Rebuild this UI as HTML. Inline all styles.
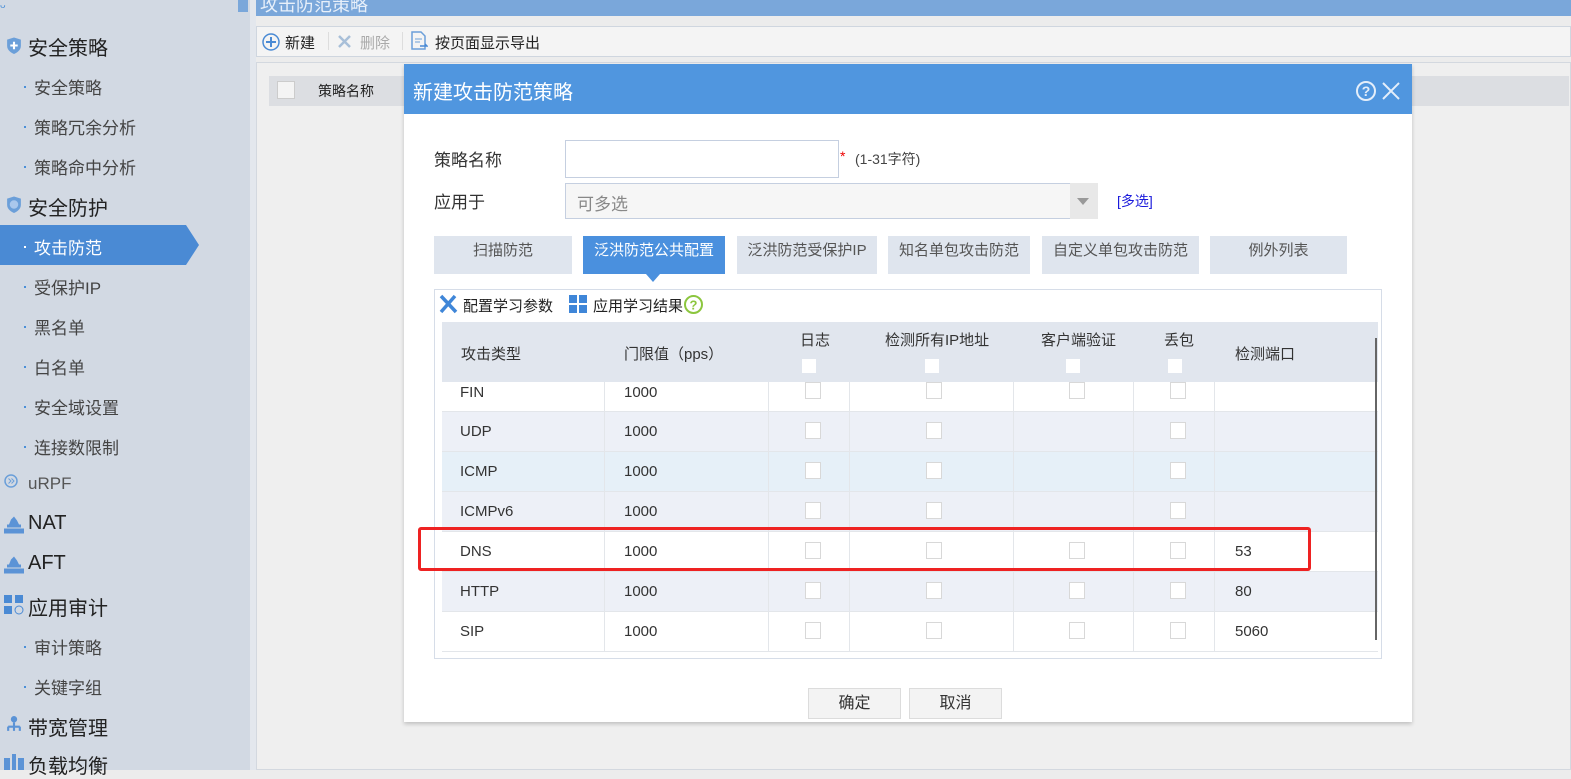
<!DOCTYPE html>
<html><head><meta charset="utf-8"><style>
*{margin:0;padding:0;box-sizing:border-box}
body{width:1571px;height:770px;overflow:hidden;position:relative;background:#ececec;font-family:"Liberation Sans","Noto Sans CJK SC",sans-serif;color:#333}
.a{position:absolute}
.side{left:0;top:0;width:250px;height:770px;background:#d2d9e3}
.strip{left:250px;top:0;width:6px;height:770px;background:#e3e7ed}
.h{font-size:20px;color:#222;left:28px}
.s{font-size:17px;color:#444;left:34px}
.dot{left:24px;width:2px;height:2px;background:#4a8fd8}
.ic{left:5px;width:17px;height:17px}
.row{left:442px;width:936px;height:40px;border-bottom:1px solid #e3e6ea}
.cell{position:absolute;top:0;height:100%;font-size:15px;line-height:40px;color:#333}
.cb{position:absolute;width:16px;height:17px;border:1px solid #d8d8d8;background:#fff}
.vl{position:absolute;top:0;width:1px;height:100%;background:#e3e6ea}
.tab{top:236px;height:38px;background:#dfe5ee;font-size:15px;color:#555;text-align:center;line-height:30px}
</style></head><body>
<div class="a side"></div><div class="a strip"></div>
<div class="a" style="left:0;top:0;font-size:10px;color:#4a8fd8">ᴗ</div>
<div class="a" style="left:238px;top:0;width:10px;height:12px;background:#7aa7da"></div>
<!-- sidebar -->
<svg class="a ic" style="top:36px;width:18px;height:19px" viewBox="0 0 17 17"><path d="M8.5 1 L15 3 V9 C15 13 11 15.5 8.5 16.5 C6 15.5 2 13 2 9 V3Z" fill="#6b9fd9"/><path d="M8.5 5v7M5 8.5h7" stroke="#fff" stroke-width="2"/></svg>
<div class="a h" style="top:32px">安全策略</div>
<div class="a dot" style="top:86px"></div><div class="a s" style="top:74px">安全策略</div>
<div class="a dot" style="top:126px"></div><div class="a s" style="top:114px">策略冗余分析</div>
<div class="a dot" style="top:166px"></div><div class="a s" style="top:154px">策略命中分析</div>
<svg class="a ic" style="top:195px;width:18px;height:19px" viewBox="0 0 17 17"><path d="M8.5 1 L15 3 V9 C15 13 11 15.5 8.5 16.5 C6 15.5 2 13 2 9 V3Z" fill="#6b9fd9"/><circle cx="8.5" cy="8.5" r="4" fill="#a9c7ec"/></svg>
<div class="a h" style="top:192px">安全防护</div>
<svg class="a" style="left:0;top:225px" width="200" height="40"><path d="M0 0H186L199 20L186 40H0Z" fill="#4a8ad4"/></svg>
<div class="a dot" style="top:246px;background:#fff"></div><div class="a s" style="top:234px;color:#fff">攻击防范</div>
<div class="a dot" style="top:286px"></div><div class="a s" style="top:274px">受保护IP</div>
<div class="a dot" style="top:326px"></div><div class="a s" style="top:314px">黑名单</div>
<div class="a dot" style="top:366px"></div><div class="a s" style="top:354px">白名单</div>
<div class="a dot" style="top:406px"></div><div class="a s" style="top:394px">安全域设置</div>
<div class="a dot" style="top:446px"></div><div class="a s" style="top:434px">连接数限制</div>
<svg class="a" style="left:4px;top:474px" width="14" height="14"><circle cx="7" cy="7" r="6" fill="none" stroke="#6b9fd9" stroke-width="1.5"/><path d="M4.5 4.5l2.5 2.5-2.5 2.5M7.5 4.5l2.5 2.5-2.5 2.5" fill="none" stroke="#6b9fd9"/></svg>
<div class="a" style="left:28px;top:474px;font-size:17px;color:#555">uRPF</div>
<svg class="a" style="left:4px;top:515px" width="20" height="20" viewBox="0 0 20 17"><path d="M0 12h20v5H0zM3 8h14v3H3zM7 3l3-3 3 4 2 4H5z" fill="#5b93d6"/></svg>
<div class="a h" style="top:512px">NAT</div>
<svg class="a" style="left:4px;top:555px" width="20" height="20" viewBox="0 0 20 17"><path d="M0 12h20v5H0zM3 8h14v3H3zM7 3l3-3 3 4 2 4H5z" fill="#5b93d6"/></svg>
<div class="a h" style="top:552px">AFT</div>
<svg class="a" style="left:4px;top:595px" width="20" height="20" viewBox="0 0 20 20"><rect x="0" y="0" width="8" height="8" fill="#4a8ad4"/><rect x="11" y="0" width="8" height="8" fill="#4a8ad4"/><rect x="0" y="11" width="8" height="8" fill="#4a8ad4"/><circle cx="15" cy="15" r="4" fill="none" stroke="#4a8ad4"/></svg>
<div class="a h" style="top:592px">应用审计</div>
<div class="a dot" style="top:646px"></div><div class="a s" style="top:634px">审计策略</div>
<div class="a dot" style="top:686px"></div><div class="a s" style="top:674px">关键字组</div>
<svg class="a" style="left:5px;top:714px" width="18" height="20" viewBox="0 0 17 17"><circle cx="8.5" cy="4" r="3" fill="#5b93d6"/><path d="M8.5 7v4M3 11h11M3 11v4M8.5 11v4M14 11v4" stroke="#5b93d6" stroke-width="2"/></svg>
<div class="a h" style="top:712px">带宽管理</div>
<svg class="a" style="left:4px;top:754px" width="20" height="17" viewBox="0 0 20 17"><rect x="0" y="4" width="6" height="12" fill="#5b93d6"/><rect x="14" y="4" width="6" height="12" fill="#5b93d6"/><rect x="8" y="0" width="4" height="16" fill="#5b93d6"/></svg>
<div class="a h" style="top:750px">负载均衡</div>
<!-- main -->
<div class="a" style="left:256px;top:0;width:1315px;height:16px;background:#7aa7da;overflow:hidden"><span style="position:absolute;left:4px;top:-9px;font-size:18px;color:#e8f0fa">攻击防范策略</span></div>
<div class="a" style="left:256px;top:26px;width:1315px;height:31px;background:#f4f4f4;border:1px solid #cfd6df"></div>
<svg class="a" style="left:262px;top:33px" width="18" height="18"><circle cx="9" cy="9" r="8" fill="none" stroke="#4a8ad4" stroke-width="1.5"/><path d="M9 4v10M4 9h10" stroke="#4a8ad4" stroke-width="2"/></svg>
<div class="a" style="left:285px;top:32px;font-size:15px;color:#222">新建</div>
<div class="a" style="left:328px;top:32px;width:1px;height:18px;background:#ddd"></div>
<svg class="a" style="left:337px;top:34px" width="15" height="15"><path d="M2 2l11 11M13 2L2 13" stroke="#a8bfd8" stroke-width="2.5"/></svg>
<div class="a" style="left:360px;top:32px;font-size:15px;color:#aaa">删除</div>
<div class="a" style="left:402px;top:32px;width:1px;height:18px;background:#ddd"></div>
<svg class="a" style="left:410px;top:31px" width="18" height="20"><path d="M2 1h9l4 4v13H2z" fill="none" stroke="#6b9fd9" stroke-width="1.5"/><path d="M5 8h7M5 11h5" stroke="#6b9fd9"/><path d="M10 15h7l-2-2" stroke="#4a8ad4" fill="none" stroke-width="1.5"/></svg>
<div class="a" style="left:435px;top:32px;font-size:15px;color:#222">按页面显示导出</div>
<div class="a" style="left:256px;top:62px;width:1315px;height:708px;background:#efefef;border:1px solid #d3d8df"></div>
<div class="a" style="left:269px;top:76px;width:1300px;height:30px;background:#dcdee2"></div>
<div class="a" style="left:277px;top:81px;width:18px;height:18px;border:1px solid #ccc;background:#f4f4f4"></div>
<div class="a" style="left:318px;top:81px;font-size:14px;color:#222">策略名称</div>
<!-- modal -->
<div class="a" style="left:404px;top:64px;width:1008px;height:658px;background:#fff;box-shadow:0 2px 4px rgba(0,0,0,.2)"></div>
<div class="a" style="left:404px;top:64px;width:1008px;height:50px;background:#5096df"></div>
<div class="a" style="left:413px;top:76px;font-size:20px;color:#fff">新建攻击防范策略</div>
<svg class="a" style="left:1356px;top:80px" width="46" height="24"><circle cx="10" cy="11" r="9" fill="none" stroke="#e4eefa" stroke-width="2"/><text x="10" y="16" font-size="14" font-family="Liberation Sans" fill="#e4eefa" text-anchor="middle" font-weight="bold">?</text><path d="M27 3l16 16M43 3L27 19" stroke="#e4eefa" stroke-width="2"/></svg>
<div class="a" style="left:434px;top:146px;font-size:17px;color:#333">策略名称</div>
<div class="a" style="left:565px;top:140px;width:274px;height:38px;border:1px solid #c5cfe0"></div>
<div class="a" style="left:840px;top:148px;font-size:14px;color:#e00">*</div>
<div class="a" style="left:855px;top:149px;font-size:14px;color:#444">(1-31字符)</div>
<div class="a" style="left:434px;top:188px;font-size:17px;color:#333">应用于</div>
<div class="a" style="left:565px;top:183px;width:527px;height:36px;border:1px solid #c5cfe0;background:#f6f6f6"></div>
<div class="a" style="left:1070px;top:183px;width:28px;height:36px;background:#e8e8e8"></div>
<div class="a" style="left:1077px;top:198px;width:0;height:0;border-left:6px solid transparent;border-right:6px solid transparent;border-top:7px solid #999"></div>
<div class="a" style="left:577px;top:190px;font-size:17px;color:#888">可多选</div>
<div class="a" style="left:1117px;top:191px;font-size:14px;color:#1a1adc">[多选]</div>
<div class="a tab" style="left:434px;width:138px">扫描防范</div>
<div class="a tab" style="left:583px;width:142px;background:#4a90de;color:#fff">泛洪防范公共配置</div>
<div class="a" style="left:646px;top:274px;border-left:7px solid transparent;border-right:7px solid transparent;border-top:8px solid #4a90de;width:0;height:0"></div>
<div class="a tab" style="left:737px;width:140px">泛洪防范受保护IP</div>
<div class="a tab" style="left:888px;width:142px">知名单包攻击防范</div>
<div class="a tab" style="left:1042px;width:157px">自定义单包攻击防范</div>
<div class="a tab" style="left:1210px;width:137px">例外列表</div>
<div class="a" style="left:434px;top:289px;width:948px;height:370px;border:1px solid #d6dde8"></div>
<svg class="a" style="left:438px;top:294px" width="20" height="20"><path d="M3 2l15 16M17 2L3 18" stroke="#3f86d8" stroke-width="3.5"/></svg>
<div class="a" style="left:463px;top:295px;font-size:15px;color:#222">配置学习参数</div>
<svg class="a" style="left:569px;top:295px" width="18" height="18"><rect x="0" y="0" width="8" height="8" fill="#3f86d8"/><rect x="10" y="0" width="8" height="8" fill="#3f86d8"/><rect x="0" y="10" width="8" height="8" fill="#3f86d8"/><rect x="10" y="10" width="8" height="8" fill="#3f86d8"/></svg>
<div class="a" style="left:593px;top:295px;font-size:15px;color:#222">应用学习结果</div>
<svg class="a" style="left:684px;top:295px" width="19" height="19"><circle cx="9.5" cy="9.5" r="8.5" fill="#fff" stroke="#8cc63e" stroke-width="2"/><text x="9.5" y="14.5" font-size="13" font-family="Liberation Sans" fill="#8cc63e" text-anchor="middle" font-weight="bold">?</text></svg>
<!-- table header -->
<div class="a" style="left:442px;top:322px;width:936px;height:60px;background:#e1e6ee"></div>
<div class="a" style="left:461px;top:343px;font-size:15px">攻击类型</div>
<div class="a" style="left:624px;top:343px;font-size:15px">门限值（pps）</div>
<div class="a" style="left:800px;top:329px;font-size:15px">日志</div>
<div class="a" style="left:885px;top:329px;font-size:15px">检测所有IP地址</div>
<div class="a" style="left:1041px;top:329px;font-size:15px">客户端验证</div>
<div class="a" style="left:1164px;top:329px;font-size:15px">丢包</div>
<div class="a" style="left:1235px;top:343px;font-size:15px">检测端口</div>
<div class="cb" style="left:802px;top:359px;border:none;width:14px;height:14px"></div>
<div class="cb" style="left:925px;top:359px;border:none;width:14px;height:14px"></div>
<div class="cb" style="left:1066px;top:359px;border:none;width:14px;height:14px"></div>
<div class="cb" style="left:1168px;top:359px;border:none;width:14px;height:14px"></div>
<!-- rows -->
<div class="a row" style="top:382px;height:30px;background:#fff"><div class="vl" style="left:162px"></div><div class="vl" style="left:326px"></div><div class="vl" style="left:407px"></div><div class="vl" style="left:571px"></div><div class="vl" style="left:691px"></div><div class="vl" style="left:772px"></div><div class="cell" style="left:18px;line-height:22px">FIN</div><div class="cell" style="left:182px;line-height:22px">1000</div><div class="cb" style="left:363px;top:0"></div><div class="cb" style="left:484px;top:0"></div><div class="cb" style="left:627px;top:0"></div><div class="cb" style="left:728px;top:0"></div></div>
<div class="a row" style="top:412px;background:#edf0f7"><div class="vl" style="left:162px"></div><div class="vl" style="left:326px"></div><div class="vl" style="left:407px"></div><div class="vl" style="left:571px"></div><div class="vl" style="left:691px"></div><div class="vl" style="left:772px"></div><div class="cell" style="left:18px">UDP</div><div class="cell" style="left:182px">1000</div><div class="cb" style="left:363px;top:10px"></div><div class="cb" style="left:484px;top:10px"></div><div class="cb" style="left:728px;top:10px"></div></div>
<div class="a row" style="top:452px;background:#e6f0f8"><div class="vl" style="left:162px"></div><div class="vl" style="left:326px"></div><div class="vl" style="left:407px"></div><div class="vl" style="left:571px"></div><div class="vl" style="left:691px"></div><div class="vl" style="left:772px"></div><div class="cell" style="left:18px">ICMP</div><div class="cell" style="left:182px">1000</div><div class="cb" style="left:363px;top:10px"></div><div class="cb" style="left:484px;top:10px"></div><div class="cb" style="left:728px;top:10px"></div></div>
<div class="a row" style="top:492px;background:#edf0f7"><div class="vl" style="left:162px"></div><div class="vl" style="left:326px"></div><div class="vl" style="left:407px"></div><div class="vl" style="left:571px"></div><div class="vl" style="left:691px"></div><div class="vl" style="left:772px"></div><div class="cell" style="left:18px">ICMPv6</div><div class="cell" style="left:182px">1000</div><div class="cb" style="left:363px;top:10px"></div><div class="cb" style="left:484px;top:10px"></div><div class="cb" style="left:728px;top:10px"></div></div>
<div class="a row" style="top:532px;background:#fff"><div class="vl" style="left:162px"></div><div class="vl" style="left:326px"></div><div class="vl" style="left:407px"></div><div class="vl" style="left:571px"></div><div class="vl" style="left:691px"></div><div class="vl" style="left:772px"></div><div class="cell" style="left:18px">DNS</div><div class="cell" style="left:182px">1000</div><div class="cb" style="left:363px;top:10px"></div><div class="cb" style="left:484px;top:10px"></div><div class="cb" style="left:627px;top:10px"></div><div class="cb" style="left:728px;top:10px"></div><div class="cell" style="left:793px">53</div></div>
<div class="a row" style="top:572px;background:#edf0f7"><div class="vl" style="left:162px"></div><div class="vl" style="left:326px"></div><div class="vl" style="left:407px"></div><div class="vl" style="left:571px"></div><div class="vl" style="left:691px"></div><div class="vl" style="left:772px"></div><div class="cell" style="left:18px">HTTP</div><div class="cell" style="left:182px">1000</div><div class="cb" style="left:363px;top:10px"></div><div class="cb" style="left:484px;top:10px"></div><div class="cb" style="left:627px;top:10px"></div><div class="cb" style="left:728px;top:10px"></div><div class="cell" style="left:793px">80</div></div>
<div class="a row" style="top:612px;background:#fff"><div class="vl" style="left:162px"></div><div class="vl" style="left:326px"></div><div class="vl" style="left:407px"></div><div class="vl" style="left:571px"></div><div class="vl" style="left:691px"></div><div class="vl" style="left:772px"></div><div class="cell" style="left:18px">SIP</div><div class="cell" style="left:182px">1000</div><div class="cb" style="left:363px;top:10px"></div><div class="cb" style="left:484px;top:10px"></div><div class="cb" style="left:627px;top:10px"></div><div class="cb" style="left:728px;top:10px"></div><div class="cell" style="left:793px">5060</div></div>
<div class="a" style="left:1375px;top:338px;width:2px;height:302px;background:#666"></div>
<div class="a" style="left:418px;top:527px;width:893px;height:44px;border:3px solid #ee2222;border-radius:3px"></div>
<div class="a" style="left:808px;top:688px;width:93px;height:31px;background:#f3f3f3;border:1px solid #dcdcdc;font-size:16px;text-align:center;line-height:29px">确定</div>
<div class="a" style="left:909px;top:688px;width:93px;height:31px;background:#f3f3f3;border:1px solid #dcdcdc;font-size:16px;text-align:center;line-height:29px">取消</div>
</body></html>
